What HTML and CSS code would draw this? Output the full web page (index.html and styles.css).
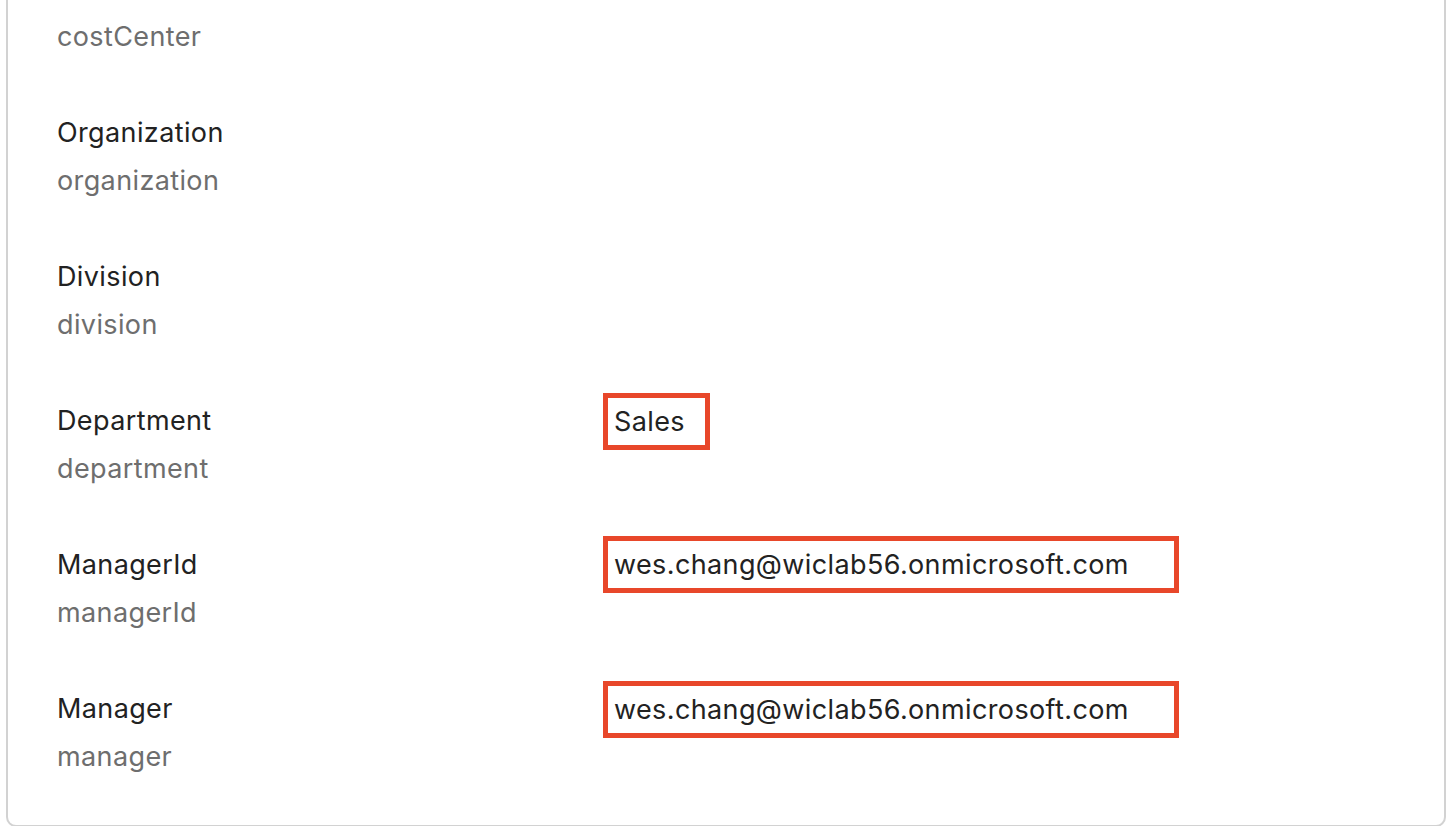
FILE: index.html
```html
<!DOCTYPE html>
<html>
<head>
<meta charset="utf-8">
<link rel="stylesheet" href="styles.css">
</head>
<body>
<div class="card">
  <div class="attrs">
    <div class="attr attr-first">
      <div class="names"><div class="sub">costCenter</div></div>
      <div class="value"></div>
    </div>
    <div class="attr">
      <div class="names"><div class="label">Organization</div><div class="sub">organization</div></div>
      <div class="value"></div>
    </div>
    <div class="attr">
      <div class="names"><div class="label">Division</div><div class="sub">division</div></div>
      <div class="value"></div>
    </div>
    <div class="attr">
      <div class="names"><div class="label">Department</div><div class="sub">department</div></div>
      <div class="value"><span class="hl hl-short">Sales</span></div>
    </div>
    <div class="attr">
      <div class="names"><div class="label">ManagerId</div><div class="sub">managerId</div></div>
      <div class="value"><span class="hl hl-wide hl-up">wes.chang@wiclab56.onmicrosoft.com</span></div>
    </div>
    <div class="attr">
      <div class="names"><div class="label">Manager</div><div class="sub">manager</div></div>
      <div class="value"><span class="hl hl-wide">wes.chang@wiclab56.onmicrosoft.com</span></div>
    </div>
  </div>
</div>
</body>
</html>
```
FILE: styles.css
```css
html, body {
  margin: 0;
  padding: 0;
  background: #ffffff;
  height: 826px;
  overflow: hidden;
}
body {
  font-family: Inter, "Noto Sans", sans-serif;
  font-size: 27px;
  letter-spacing: 0.38px;
  color: #222222;
}
.card {
  margin-left: 6px;
  width: 1440px;
  height: 827px;
  border: 2px solid #d2d2d2;
  border-top: none;
  border-radius: 0 0 10px 10px;
  box-sizing: border-box;
}
.attrs {
  display: flex;
  flex-direction: column;
  gap: 48px;
  padding: 13px 0 0 49px;
}
.attr {
  display: grid;
  grid-template-columns: 546px 1fr;
  align-items: start;
}
.names {
  display: flex;
  flex-direction: column;
}
.label, .sub {
  line-height: 48px;
  white-space: nowrap;
}
.label {
  color: #222222;
}
.sub {
  color: #6e6e6e;
}
.value {
  line-height: 47px;
  color: #222222;
}
.hl {
  display: inline-block;
  border: 5px solid #e8472a;
  padding: 0 6px 0 6px;
  margin-top: -4px;
  white-space: nowrap;
}
.hl-short {
  padding-right: 20px;
}
.hl-wide {
  width: 576px;
  box-sizing: border-box;
}
.hl-up {
  margin-top: -7px;
}
```
